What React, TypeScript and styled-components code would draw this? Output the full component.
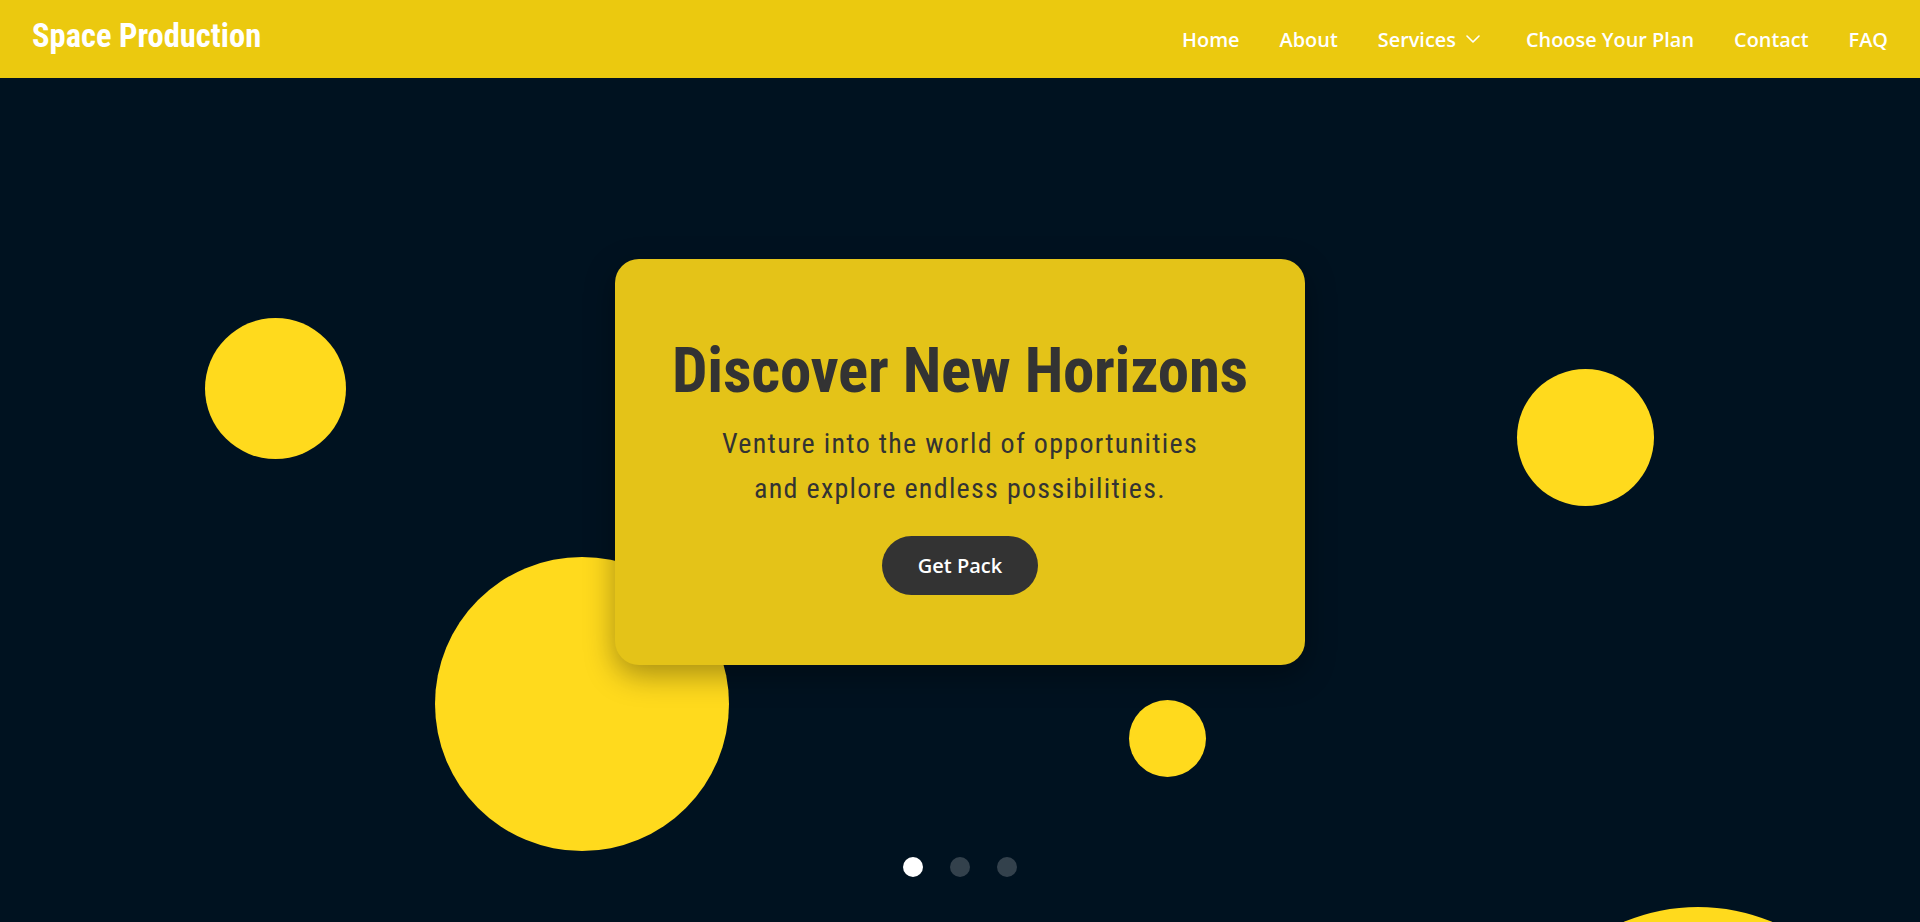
import React from "react";
import styled, { createGlobalStyle } from "styled-components";

const GlobalStyle = createGlobalStyle`
  html, body { margin: 0; padding: 0; }
  body {
    background: #001220;
    font-family: "Open Sans", "Liberation Sans", sans-serif;
    overflow: hidden;
  }
  * { box-sizing: border-box; }
`;

const Header = styled.header`
  position: fixed;
  top: 0;
  left: 0;
  right: 0;
  z-index: 10;
  height: 78px;
  background: #ebc90f;
  display: flex;
  align-items: center;
  justify-content: space-between;
  padding: 0 32px;
`;

const Logo = styled.a`
  font-family: Roboto, "Liberation Sans", sans-serif;
  font-stretch: 75%;
  font-weight: 700;
  font-size: 32.5px;
  line-height: 1;
  color: #fff;
  text-decoration: none;
  padding-bottom: 6px;
`;

const Nav = styled.nav`
  display: flex;
  align-items: center;
  gap: 40px;
`;

const NavLink = styled.a`
  display: flex;
  align-items: center;
  gap: 10px;
  font-family: "Open Sans", "Liberation Sans", sans-serif;
  font-weight: 600;
  font-size: 19.9px;
  color: #fff;
  text-decoration: none;
  white-space: nowrap;

  svg {
    margin-right: 6px;
  }
`;

const Hero = styled.section`
  position: relative;
  height: 100vh;
  overflow: hidden;
  display: flex;
  align-items: center;
  justify-content: center;
`;

const Blob = styled.div<{ $left: number; $top: number; $size: number }>`
  position: absolute;
  left: ${(p) => p.$left}px;
  top: ${(p) => p.$top}px;
  width: ${(p) => p.$size}px;
  height: ${(p) => p.$size}px;
  border-radius: 50%;
  background: #ffda1d;
`;

const Card = styled.div`
  position: relative;
  z-index: 2;
  width: 690px;
  background: #e4c318;
  border-radius: 24px;
  box-shadow: 0 10px 30px rgba(0, 0, 0, 0.35);
  padding: 74px 40px 70px;
  display: flex;
  flex-direction: column;
  align-items: center;
  text-align: center;
  margin-top: 1px;
`;

const Title = styled.h1`
  margin: 0 0 12px;
  font-family: Roboto, "Liberation Sans", sans-serif;
  font-stretch: 75%;
  font-weight: 700;
  font-size: 63px;
  line-height: 76px;
  letter-spacing: -0.3px;
  color: #333;
`;

const Subtitle = styled.p`
  margin: 0 0 25px;
  font-family: Roboto, "Liberation Sans", sans-serif;
  font-stretch: 75%;
  font-weight: 400;
  font-size: 28px;
  line-height: 45px;
  letter-spacing: 1.3px;
  color: #333;
`;

const Button = styled.a`
  display: inline-block;
  background: #333;
  color: #fff;
  font-family: "Open Sans", "Liberation Sans", sans-serif;
  font-weight: 600;
  font-size: 20px;
  line-height: 27px;
  padding: 16px 36px;
  border-radius: 999px;
  text-decoration: none;
`;

const Dots = styled.div`
  position: absolute;
  left: 0;
  right: 0;
  bottom: 45px;
  display: flex;
  justify-content: center;
  gap: 27px;
  z-index: 3;
`;

const Dot = styled.span<{ $active?: boolean }>`
  width: 20px;
  height: 20px;
  border-radius: 50%;
  background: ${(p) => (p.$active ? "#fff" : "rgba(255,255,255,0.2)")};
`;

const Chevron = () => (
  <svg width="14" height="8" viewBox="0 0 14 8" fill="none">
    <polyline points="1,1 7,7 13,1" stroke="#fff" strokeWidth="1.6" strokeLinecap="round" strokeLinejoin="round" />
  </svg>
);

export default function App() {
  return (
    <>
      <GlobalStyle />
      <Header>
        <Logo href="#">Space Production</Logo>
        <Nav>
          <NavLink href="#">Home</NavLink>
          <NavLink href="#">About</NavLink>
          <NavLink href="#">
            Services <Chevron />
          </NavLink>
          <NavLink href="#">Choose Your Plan</NavLink>
          <NavLink href="#">Contact</NavLink>
          <NavLink href="#">FAQ</NavLink>
        </Nav>
      </Header>
      <Hero>
        <Blob $left={205} $top={318} $size={141} />
        <Blob $left={435} $top={557} $size={294} />
        <Blob $left={1517} $top={369} $size={137} />
        <Blob $left={1129} $top={700} $size={77} />
        <Blob $left={1506} $top={907} $size={384} />
        <Card>
          <Title>Discover New Horizons</Title>
          <Subtitle>
            Venture into the world of opportunities
            <br />
            and explore endless possibilities.
          </Subtitle>
          <Button href="#">Get Pack</Button>
        </Card>
        <Dots>
          <Dot $active />
          <Dot />
          <Dot />
        </Dots>
      </Hero>
    </>
  );
}
